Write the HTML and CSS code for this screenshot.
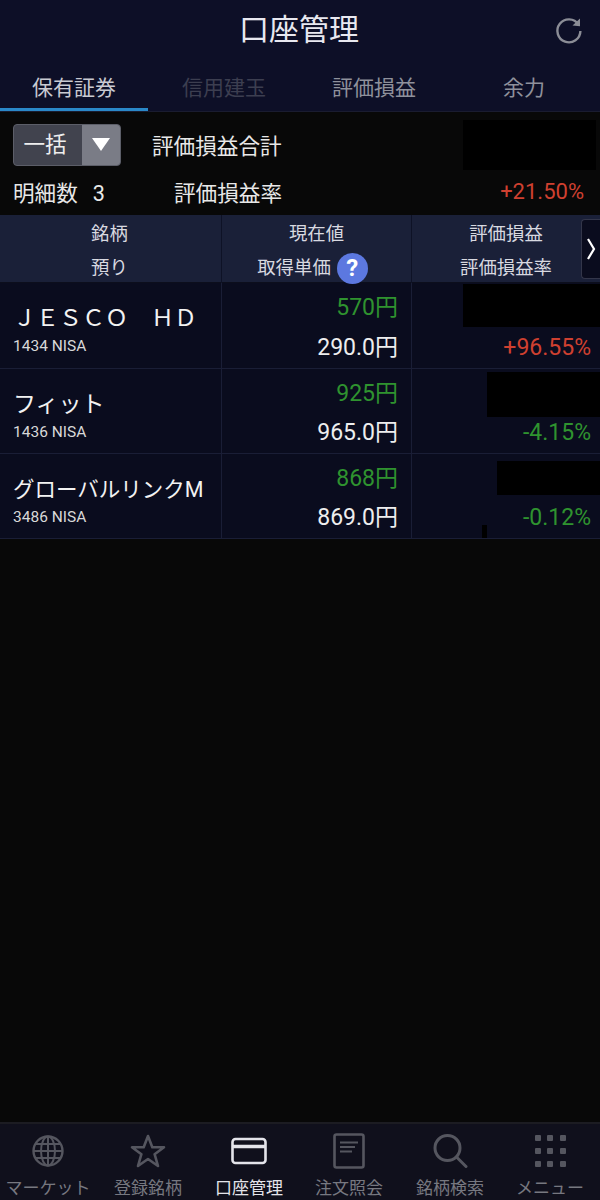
FILE: index.html
```html
<!DOCTYPE HTML>
<html lang="ja">

<head>
    <title>口座管理</title>
    <meta name="viewport" content="width=device-width, initial-scale=1">
    <link rel="stylesheet" href="styles.css">
</head>

<body>
    <div class="phone">
        <div class="topnav">
            <div class="titlebar">
                <h1>口座管理</h1>
                <svg class="reload" width="30" height="30" viewBox="0 0 30 30">
                    <path d="M24.5 9.5A11.5 11.5 0 1 0 26.4 16" fill="none" stroke="#8b8d96" stroke-width="2.4" />
                    <path d="M18.5 10.6L26 3.6V11.2Z" fill="#8b8d96" />
                </svg>
            </div>
            <div class="tabs">
                <div class="tab active">保有証券</div>
                <div class="tab disabled">信用建玉</div>
                <div class="tab">評価損益</div>
                <div class="tab">余力</div>
            </div>
        </div>

        <div class="summary">
            <div class="sumrow first">
                <div class="select">
                    <span class="select-text">一括</span>
                    <span class="select-arrow"><i></i></span>
                </div>
                <span class="sumlabel total">評価損益合計</span>
                <div class="mask mask-total"></div>
            </div>
            <div class="sumrow second">
                <span class="count">明細数<b>3</b></span>
                <span class="sumlabel rate">評価損益率</span>
                <span class="sumvalue up">+21.50%</span>
            </div>
        </div>

        <div class="table">
            <div class="thead">
                <div class="th">
                    <span>銘柄</span>
                    <span>預り</span>
                </div>
                <div class="th">
                    <span>現在値</span>
                    <span class="with-help">取得単価<em class="help">?</em></span>
                </div>
                <div class="th">
                    <span>評価損益</span>
                    <span>評価損益率</span>
                </div>
                <div class="more">
                    <svg width="10" height="24" viewBox="0 0 10 24">
                        <path d="M2 2L8 12L2 22" fill="none" stroke="#fff" stroke-width="2.2" />
                    </svg>
                </div>
            </div>

            <div class="row">
                <div class="cell name">
                    <div class="stock">ＪＥＳＣＯ　ＨＤ</div>
                    <div class="code">1434 NISA</div>
                </div>
                <div class="cell num">
                    <span class="green">570円</span>
                    <span>290.0円</span>
                </div>
                <div class="cell num pl">
                    <div class="mask mask-a"></div>
                    <span class="up">+96.55%</span>
                </div>
            </div>

            <div class="row">
                <div class="cell name">
                    <div class="stock">フィット</div>
                    <div class="code">1436 NISA</div>
                </div>
                <div class="cell num">
                    <span class="green">925円</span>
                    <span>965.0円</span>
                </div>
                <div class="cell num pl">
                    <div class="mask mask-b"></div>
                    <span class="green">-4.15%</span>
                </div>
            </div>

            <div class="row">
                <div class="cell name">
                    <div class="stock tight">グローバルリンクM</div>
                    <div class="code">3486 NISA</div>
                </div>
                <div class="cell num">
                    <span class="green">868円</span>
                    <span>869.0円</span>
                </div>
                <div class="cell num pl">
                    <div class="mask mask-c"></div>
                    <div class="mask mask-d"></div>
                    <span class="green">-0.12%</span>
                </div>
            </div>
        </div>

        <div class="spacer"></div>

        <div class="bottomnav">
            <div class="navitem">
                <svg width="36" height="36" viewBox="0 0 36 36" fill="none" stroke="#55565f" stroke-width="2">
                    <circle cx="18" cy="18" r="14.5" stroke-width="2.4" />
                    <ellipse cx="18" cy="18" rx="7" ry="14.5" />
                    <path d="M18 3.5V32.5M3.5 18H32.5M5.5 11H30.5M5.5 25H30.5" />
                </svg>
                <span>マーケット</span>
            </div>
            <div class="navitem">
                <svg width="38" height="36" viewBox="0 0 38 36" fill="none" stroke="#55565f" stroke-width="2.6">
                    <path d="M19 3L23.3 14.2H35L25.6 21.2L29 33L19 26L9 33L12.4 21.2L3 14.2H14.7Z" stroke-linejoin="round" />
                </svg>
                <span>登録銘柄</span>
            </div>
            <div class="navitem current">
                <svg width="36" height="36" viewBox="0 0 36 36" fill="none" stroke="#e4e4ea" stroke-width="2.6">
                    <rect x="1.5" y="6" width="33" height="24" rx="3" />
                    <path d="M1.5 13.5H34.5" stroke-width="3.4" />
                </svg>
                <span>口座管理</span>
            </div>
            <div class="navitem">
                <svg width="36" height="36" viewBox="0 0 36 36" fill="none" stroke="#55565f" stroke-width="2.6">
                    <rect x="3.5" y="1.5" width="29" height="33" rx="2" />
                    <path d="M9 9.5H27M9 14H24M9 18.5H21" stroke-width="1.8" />
                </svg>
                <span>注文照会</span>
            </div>
            <div class="navitem">
                <svg width="36" height="36" viewBox="0 0 36 36" fill="none" stroke="#55565f" stroke-width="3">
                    <circle cx="15.5" cy="15" r="12.5" />
                    <path d="M24.5 24L34 33.5" stroke-linecap="round" />
                </svg>
                <span>銘柄検索</span>
            </div>
            <div class="navitem">
                <svg width="36" height="36" viewBox="0 0 36 36" fill="#55565f">
                    <rect x="3" y="2" width="6" height="6" rx="1" />
                    <rect x="15" y="2" width="6" height="6" rx="1" />
                    <rect x="28" y="2" width="6" height="6" rx="1" />
                    <rect x="3" y="15" width="6" height="6" rx="1" />
                    <rect x="15" y="15" width="6" height="6" rx="1" />
                    <rect x="28" y="15" width="6" height="6" rx="1" />
                    <rect x="3" y="28" width="6" height="6" rx="1" />
                    <rect x="15" y="28" width="6" height="6" rx="1" />
                    <rect x="28" y="28" width="6" height="6" rx="1" />
                </svg>
                <span>メニュー</span>
            </div>
        </div>
    </div>
</body>

</html>
```

FILE: styles.css
```css
html {
    font-family: Roboto, "Noto Sans CJK JP", sans-serif;
}

body {
    margin: 0;
    background-color: #080808;
}

.phone {
    width: 600px;
    height: 1200px;
    display: flex;
    flex-direction: column;
    overflow: hidden;
    background-color: #080808;
}

/* header + tabs */
.topnav {
    height: 112px;
    background-color: #0d0f27;
    border-bottom: 1px solid #1a1c30;
    box-sizing: border-box;
}

.titlebar {
    height: 68px;
    position: relative;
    display: flex;
    justify-content: center;
    align-items: center;
    padding: 0 2px 9px 0;
    box-sizing: border-box;
}

h1 {
    margin: 0;
    font-size: 30px;
    font-weight: 400;
    line-height: 40px;
    color: #e8e8f0;
}

.reload {
    position: absolute;
    right: 16px;
    top: 15px;
}

.tabs {
    display: flex;
    height: 43px;
}

.tab {
    width: 148px;
    margin-right: 2px;
    box-sizing: border-box;
    font-size: 21px;
    line-height: 40px;
    text-align: center;
    color: #8f919c;
}

.tab:last-child {
    margin-right: 0;
}

.tab.active {
    color: #c9cad2;
    border-bottom: 3px solid #2a88c8;
}

.tab.disabled {
    color: #3c3e50;
}

/* summary */
.summary {
    height: 103px;
    color: #e8e8e8;
    font-size: 21.6px;
    position: relative;
}

.sumrow {
    display: flex;
    align-items: center;
    padding-left: 13px;
}

.sumrow.first {
    height: 65px;
}

.sumrow.second {
    height: 28px;
    padding-right: 16px;
}

.select {
    width: 108px;
    height: 42px;
    display: flex;
    box-sizing: border-box;
    border: 1px solid #5c5e68;
    border-radius: 4px;
    background-color: #41434e;
    overflow: hidden;
}

.select-text {
    width: 62px;
    padding-right: 6px;
    text-align: center;
    line-height: 40px;
    font-size: 21.6px;
    color: #eee;
}

.select-arrow {
    flex: 1;
    display: flex;
    justify-content: center;
    align-items: center;
    background-color: #7a7c86;
}

.select-arrow i {
    width: 0;
    height: 0;
    border-left: 9px solid transparent;
    border-right: 9px solid transparent;
    border-top: 13px solid #fff;
}

.sumlabel.total {
    margin-left: 31px;
}

.count {
    width: 161px;
}

.count b {
    font-weight: 400;
    margin-left: 15px;
}

.sumvalue {
    margin-left: auto;
    font-size: 22px;
}

.up {
    color: #cf4030;
}

.green {
    color: #2f932f;
}

.mask {
    position: absolute;
    background-color: #000;
}

.mask-total {
    left: 463px;
    top: 8px;
    width: 133px;
    height: 50px;
}

/* table */
.thead {
    height: 68px;
    display: grid;
    grid-template-columns: 222px 190px 1fr;
    background-color: #1a2038;
    position: relative;
    box-sizing: border-box;
    border-bottom: 1px solid #0c0e1c;
}

.th {
    display: flex;
    flex-direction: column;
    align-items: center;
    padding-top: 2px;
    border-right: 1px solid #0e1226;
    font-size: 18.4px;
    line-height: 34px;
    color: #d8d9e0;
}

.th:first-child {
    padding-right: 2px;
}

.th:nth-child(3) {
    border-right: 0;
}

.with-help {
    display: flex;
    align-items: center;
    margin-right: 8px;
}

.help {
    width: 31px;
    height: 31px;
    margin-left: 6px;
    border-radius: 50%;
    background-color: #5c78e0;
    color: #fff;
    font-style: normal;
    font-weight: 700;
    font-size: 24px;
    line-height: 31px;
    text-align: center;
}

.more {
    position: absolute;
    right: 0;
    top: 4px;
    width: 18px;
    height: 58px;
    display: flex;
    align-items: center;
    justify-content: center;
    background-color: #0a0c1e;
    border: 1px solid #33364a;
    border-right: 0;
    border-radius: 4px 0 0 4px;
}

.row {
    height: 85px;
    display: grid;
    grid-template-columns: 222px 190px 1fr;
    background-color: #0a0c1e;
    box-sizing: border-box;
    border-bottom: 1px solid #1a1e36;
    color: #eee;
}

.thead + .row {
    height: 86px;
}

.cell {
    border-right: 1px solid #1a1e36;
    position: relative;
}

.cell:last-child {
    border-right: 0;
}

.name {
    padding: 19px 0 0 13px;
}

.stock {
    font-size: 23px;
    line-height: 34px;
    white-space: nowrap;
    color: #f2f2f2;
}

.stock.tight {
    font-size: 21.5px;
}

.code {
    font-size: 15.5px;
    line-height: 18px;
    margin-top: 1px;
    color: #d8d8d8;
}

.num {
    display: flex;
    flex-direction: column;
    align-items: flex-end;
    justify-content: space-between;
    padding: 9px 13px 4px 0;
    font-size: 23px;
    line-height: 32px;
}

.pl {
    justify-content: flex-end;
    padding-right: 9px;
}

.mask-a {
    right: 0;
    top: 1px;
    width: 137px;
    height: 43px;
}

.mask-b {
    right: 0;
    top: 3px;
    width: 113px;
    height: 45px;
}

.mask-c {
    right: 0;
    top: 7px;
    width: 103px;
    height: 34px;
}

.mask-d {
    left: 70px;
    bottom: 0;
    width: 5px;
    height: 13px;
}

.spacer {
    flex: 1;
}

/* bottom nav */
.bottomnav {
    height: 78px;
    display: grid;
    grid-template-columns: repeat(6, 1fr);
    background-color: #10101c;
    border-top: 2px solid #1c1c22;
    box-sizing: border-box;
}

.navitem {
    display: flex;
    flex-direction: column;
    align-items: center;
    padding-top: 9px;
    color: #777880;
    font-size: 17px;
    line-height: 22px;
}

/* labels in the screenshot sit a bit left of even columns */
.navitem:nth-child(-n+2) {
    margin-left: -4px;
}

.navitem:nth-child(3),
.navitem:nth-child(4) {
    margin-left: -2px;
}

.navitem svg {
    margin-bottom: 8px;
}

.navitem.current {
    color: #e4e4ea;
}
```
